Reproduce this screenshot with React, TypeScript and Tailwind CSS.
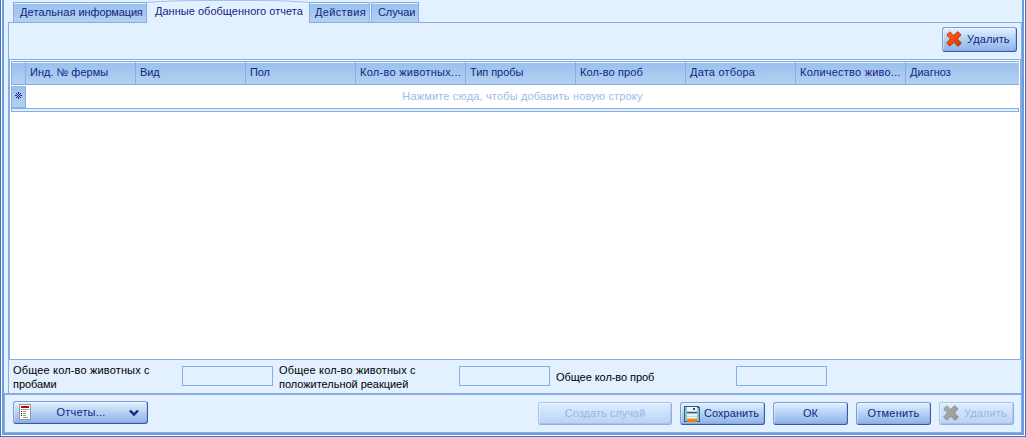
import React from "react";

type IconProps = { disabled?: boolean };

function CrossIcon({ disabled = false }: IconProps) {
  return (
    <svg width="16" height="16" viewBox="0 0 16 16" className="shrink-0 -mt-0.5">
      <defs>
        <linearGradient id={disabled ? "crossOff" : "crossOn"} x1="0" y1="0" x2="1" y2="1">
          <stop offset="0" stopColor={disabled ? "#adadad" : "#ff6a2a"} />
          <stop offset=".5" stopColor={disabled ? "#a2a2a2" : "#f84a08"} />
          <stop offset="1" stopColor={disabled ? "#929292" : "#c93408"} />
        </linearGradient>
      </defs>
      <path
        d="M4 .8 7.7 4.6 11.2.8 12.6 1.2 14.8 3.8 14.6 4.8 11.3 8 15.1 11.6 15 12.6 12.5 15 11.4 15 8 11.3 4.3 14.8 3.2 14.7 1 12.3 1 11.3 4.6 7.8 1 4.7 1 3.5Z"
        fill={disabled ? "url(#crossOff)" : "url(#crossOn)"}
        stroke={disabled ? "#858585" : "#983010"}
        strokeWidth="1"
        strokeDasharray="1.5 .5"
      />
    </svg>
  );
}

function SaveIcon() {
  return (
    <svg width="16" height="16" viewBox="0 0 16 16" shapeRendering="crispEdges" className="shrink-0">
      <path d="M0 0H15V1H16V16H0Z" fill="#2b6379" />
      <path d="M1 1H3V15H1ZM13 2H15V15H13Z" fill="#8cc0d0" />
      <path d="M2 7H14V8H2Z" fill="#8cc0d0" />
      <path d="M3 1H13V6H3Z" fill="#f1f6f9" />
      <path d="M3 5H13V6H3Z" fill="#bfd3dc" />
      <path d="M9 2H11V4H9Z" fill="#1d5468" />
      <path d="M3 8H13V13H3Z" fill="#eeeeee" />
      <path d="M3 10H13V11H3ZM3 12H13V13H3Z" fill="#d2d2d2" />
      <path d="M3 13H13V16H3Z" fill="#f98000" />
    </svg>
  );
}

function ReportIcon() {
  return (
    <svg width="12" height="16" viewBox="0 0 12 16" shapeRendering="crispEdges" className="shrink-0 -mt-px">
      <path d="M0 0H12V16H0Z" fill="#999" />
      <path d="M1 1H11V15H1Z" fill="#fff" />
      <path d="M2 2H10V4H2Z" fill="#c80000" />
      <path d="M2 5H10V6H2ZM4 7H7V8H4ZM4 9H7V10H4ZM4 11H7V12H4ZM4 13H9V14H4Z" fill="#999" />
      <path d="M2 7H3V8H2ZM2 9H3V10H2ZM2 11H3V12H2Z" fill="#111" />
    </svg>
  );
}

type ButtonProps = { className: string; disabled?: boolean; children: React.ReactNode };

function Button({ className, disabled = false, children }: ButtonProps) {
  const tone = disabled
    ? "border-[#a9c5ec] border-r-[#94ace0] border-b-[#94ace0] from-[#deedfd] to-[#b9d3f4] text-[#94b8e8]"
    : "border-[#7c9fdb] border-r-[#4057a8] border-b-[#4057a8] from-[#e3f1ff] via-[#b4d1f5] to-[#8db2e5] text-[#14247f]";
  return (
    <button
      disabled={disabled}
      className={`flex shrink-0 items-center rounded-[3px] border bg-linear-to-b whitespace-nowrap shadow-[inset_1px_1px_0_#ffffff66,inset_-1px_-1px_0_#6f8fd044] ${tone} ${className}`}
    >
      {children}
    </button>
  );
}

const columns = [
  { title: "Инд. № фермы", tracking: "tracking-[0px]" },
  { title: "Вид", tracking: "tracking-[-0.1px]" },
  { title: "Пол", tracking: "tracking-[-0.2px]" },
  { title: "Кол-во животных...", tracking: "tracking-[0.28px]" },
  { title: "Тип пробы", tracking: "tracking-[-0.05px]" },
  { title: "Кол-во проб", tracking: "tracking-[0.1px]" },
  { title: "Дата отбора", tracking: "tracking-[0.2px]" },
  { title: "Количество живо...", tracking: "tracking-[0.23px]" },
  { title: "Диагноз", tracking: "tracking-[0px]" },
];

function Tabs() {
  const tab =
    "mt-[2px] h-5 border border-b-0 border-[#86aee3] bg-linear-to-b from-[#99c0ed] to-[#b3d1f2] pt-[2px] shadow-[inset_0_1px_0_#e2f0ff]";
  return (
    <nav className="flex h-[22px] shrink-0 pl-[5px] leading-[14px] whitespace-nowrap">
      <div className={`${tab} w-[134px] pl-[6px]`}>
        <span className="tracking-[0.1px]">Детальная </span>
        <span className="tracking-[-0.15px]">информация</span>
      </div>
      <div className="relative z-10 h-[23px] w-[162px] bg-[#e2f0ff] pt-1 pl-2 tracking-[0.02px]">
        <svg width="162" height="3" className="absolute top-0 left-0">
          <path d="M0 2.5C18 .8 38 .5 58 .5H112C132 .5 146 1.2 162 2.5" fill="none" stroke="#9fc2ec" />
        </svg>
        Данные обобщенного отчета
      </div>
      <div className={`${tab} w-[61px] pl-[5px] tracking-[0.35px]`}>Действия</div>
      <div className={`${tab} ml-px w-12 pl-[6px] tracking-[-0.1px]`}>Случаи</div>
    </nav>
  );
}

function Grid() {
  return (
    <section className="flex h-[301px] shrink-0 flex-col border border-[#86aee3] bg-white pt-px pr-px pl-px">
      <div className="flex h-6 shrink-0 border-y border-l border-[#86aee3] bg-linear-to-b from-[#99c0ed] to-[#b3d1f2] shadow-[inset_0_1px_0_#e2f0ff]">
        <div className="w-[14px] shrink-0 border-r border-[#86aee3]" />
        {columns.map((c) => (
          <div
            key={c.title}
            className={`w-[110px] shrink-0 border-r border-[#86aee3] pt-[3px] pl-1 leading-[14px] whitespace-nowrap last:w-auto last:border-r-0 ${c.tracking}`}
          >
            {c.title}
          </div>
        ))}
      </div>
      <div className="flex h-[23px] shrink-0">
        <div className="mt-px flex w-[15px] shrink-0 items-center justify-center border-x border-b border-[#86aee3] bg-linear-to-b from-[#99c0ed] to-[#b3d1f2]">
          <svg width="7" height="7" viewBox="0 0 7 7" className="-mt-0.5">
            <path
              d="M3 0H4V2H3ZM3 5H4V7H3ZM0 3H2V4H0ZM5 3H7V4H5ZM1 1H2V2H1ZM5 1H6V2H5ZM1 5H2V6H1ZM5 5H6V6H5ZM2 2H3V3H2ZM4 2H5V3H4ZM2 4H3V5H2ZM4 4H5V5H4ZM3 3H4V4H3Z"
              fill="#14247f"
              shapeRendering="crispEdges"
            />
          </svg>
        </div>
        <div className="flex-1 pt-[4px] text-center leading-[14px] tracking-[0.16px] text-[#9bbce8]">
          Нажмите сюда, чтобы добавить новую строку
        </div>
      </div>
      <div className="h-1 shrink-0 border border-[#86aee3] bg-[#e2f0ff]" />
    </section>
  );
}

function Totals() {
  const field = "mt-[6px] h-5 w-[91px] shrink-0 border border-[#86aee3]";
  return (
    <section className="flex h-[33px] shrink-0 pl-1 leading-[14px] text-black">
      <div className="w-[169px] shrink-0 pt-[3px]">
        <div className="tracking-[0.16px]">Общее кол-во животных с</div>
        <div className="tracking-[-0.05px]">пробами</div>
      </div>
      <div className={field} />
      <div className="ml-[6px] w-[180px] shrink-0 pt-[3px]">
        <div className="tracking-[0.16px]">Общее кол-во животных с</div>
        <div className="tracking-[-0.03px]">положительной реакцией</div>
      </div>
      <div className={field} />
      <div className="ml-[6px] w-[180px] shrink-0 pt-[10px] tracking-[-0.06px]">Общее кол-во проб</div>
      <div className={field} />
    </section>
  );
}

export default function App() {
  return (
    <div className="h-[437px] w-[1026px] overflow-hidden border-x border-b border-[#4771b9] bg-white px-px pb-px font-['Liberation_Sans',Arial,sans-serif] text-[11px] text-[#14247f]">
      <div className="flex h-[435px] flex-col border-x-2 border-b-2 border-[#6b9ddd] bg-[#e2f0ff]">
        <div className="flex h-[393px] shrink-0 flex-col pl-1">
          <Tabs />
          <div className="flex h-[371px] flex-col border-x border-t border-[#86aee3]">
            <div className="flex h-9 shrink-0 justify-end pt-1 pr-1">
              <Button className="h-[25px] w-[75px] pl-[3px]">
                <CrossIcon />
                <span className="ml-[5px] tracking-[0.1px]">Удалить</span>
              </Button>
            </div>
            <Grid />
            <Totals />
          </div>
        </div>
        <footer className="flex h-10 shrink-0 border border-t-2 border-[#86aee3] pl-2">
          <Button className="mt-[6px] h-[23px] w-[135px] pl-[5px]">
            <ReportIcon />
            <span className="ml-[25px] w-[50px] tracking-[0.2px]">Отчеты...</span>
            <svg width="10" height="8" viewBox="0 0 10 8" className="ml-[23px]">
              <path d="M1 1.5 5 5.5 9 1.5" fill="none" stroke="#14247f" strokeWidth="2.4" />
            </svg>
          </Button>
          <div className="mt-[7px] ml-auto flex gap-2 pr-[7px]">
            <Button disabled className="h-[23px] w-[134px] justify-center">
              Создать случай
            </Button>
            <Button className="h-[23px] w-[85px] pl-[3px]">
              <SaveIcon />
              <span className="ml-1 tracking-[0.05px]">Сохранить</span>
            </Button>
            <Button className="h-[23px] w-[75px] justify-center">ОК</Button>
            <Button className="h-[23px] w-[75px] justify-center tracking-[0.2px]">Отменить</Button>
            <Button disabled className="h-[23px] w-[75px] pl-[3px]">
              <CrossIcon disabled />
              <span className="ml-[5px] tracking-[0.1px]">Удалить</span>
            </Button>
          </div>
        </footer>
      </div>
    </div>
  );
}
